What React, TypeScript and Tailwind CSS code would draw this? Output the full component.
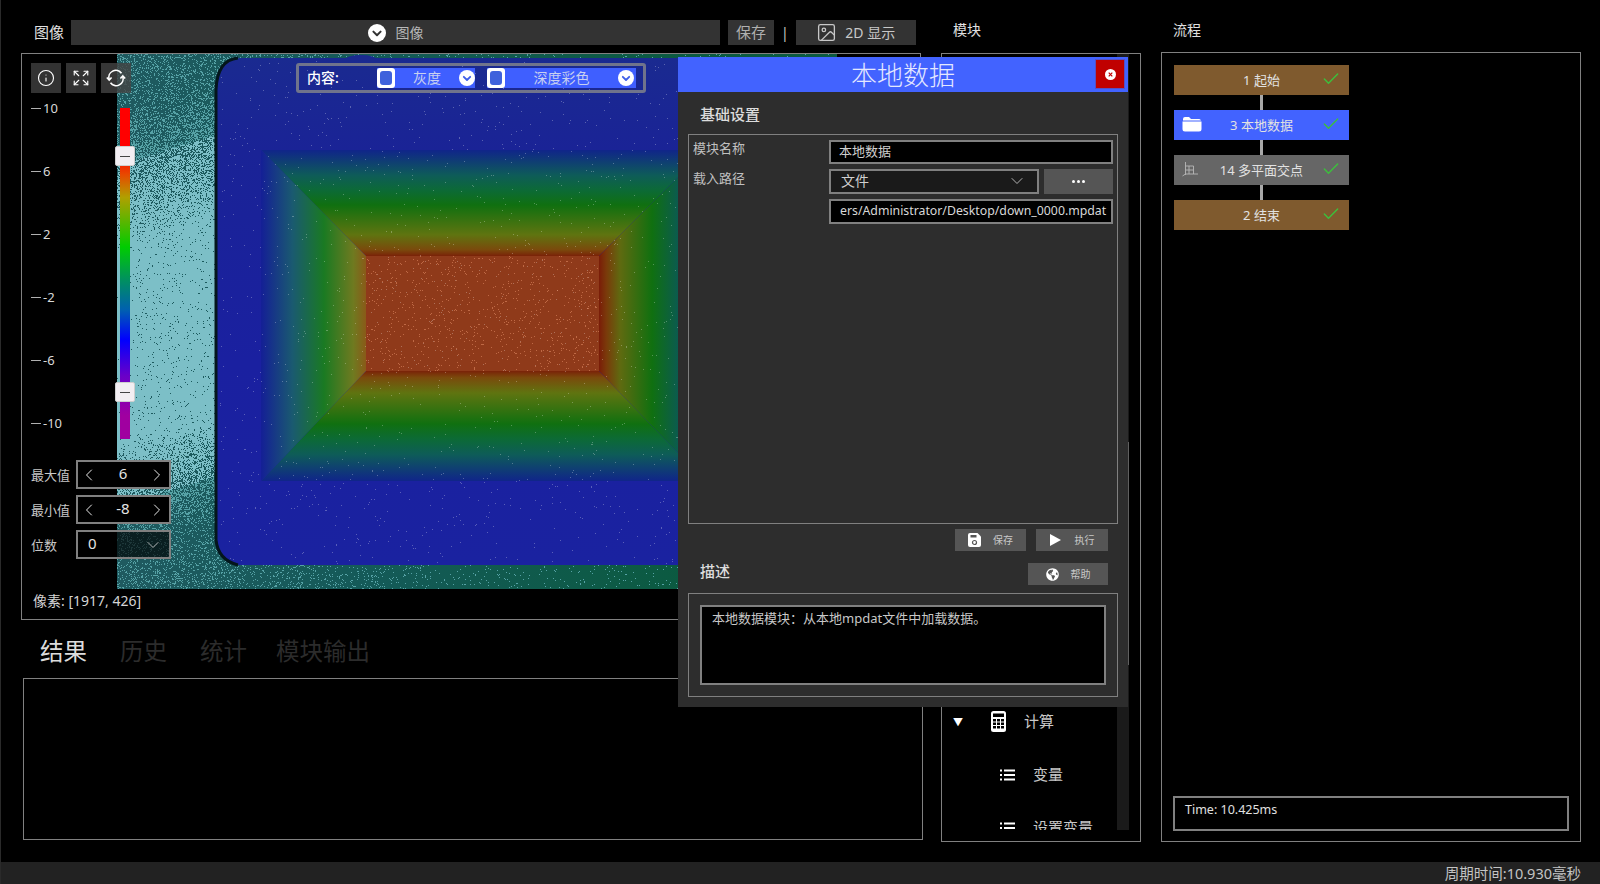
import React, { useMemo } from "react";
import { Info, Expand, Image as ImageIcon, ChevronLeft, ChevronRight, ChevronDown, Check } from "lucide-react";
import { FaGlobeAmericas } from "react-icons/fa";

const ticks = ["10", "6", "2", "-2", "-6", "-10"];

const makeRandom = (seed: number) => () => {
  seed = (seed + 0x6d2b79f5) | 0;
  let t = Math.imul(seed ^ (seed >>> 15), 1 | seed);
  t = (t + Math.imul(t ^ (t >>> 7), 61 | t)) ^ t;
  return ((t ^ (t >>> 14)) >>> 0) / 4294967296;
};

const lightDensity = (x: number, y: number) => {
  if (x > 232) return Math.max(0.03, 0.16 * (1 - (x - 232) / 260));
  const t = y + (x - 117) * 0.3;
  if (t < 110) return 0.2;
  if (t < 250) return 0.2 + ((t - 110) / 140) * 0.76;
  if (t < 445) return 0.97;
  if (t < 545) return 0.97 - ((t - 445) / 100) * 0.77;
  return 0.18;
};

// speckle of the scan, drawn as 1px runs
const buildSpeckle = () => {
  const rnd = makeRandom(7);
  let bright = "";
  let dim = "";
  for (let y = 53; y < 589; y++) {
    const right = y < 60 ? 830 : y > 560 ? 680 : 232;
    let run = 0;
    for (let x = 117; x <= right; x++) {
      const p = lightDensity(x, y);
      if (x < right && rnd() < p) {
        run++;
      } else if (run) {
        const seg = `M${x - run} ${y}h${run}v1h-${run}z`;
        if (p < 0.5) dim += seg;
        else bright += seg;
        run = 0;
      }
    }
  }
  let sparks = "";
  for (let i = 0; i < 1500; i++) {
    const x = Math.floor(220 + rnd() * 480);
    const y = Math.floor(60 + rnd() * 504);
    sparks += `M${x} ${y}h1v1h-1z`;
  }
  let hot = "";
  for (let i = 0; i < 800; i++) {
    const x = Math.floor(366 + rnd() * 233);
    const y = Math.floor(256 + rnd() * 115);
    hot += `M${x} ${y}h1v1h-1z`;
  }
  return { bright, dim, sparks, hot };
};

const DepthImage = () => {
  const { bright, dim, sparks, hot } = useMemo(buildSpeckle, []);
  return (
    <svg className="absolute left-[95px] top-[-1px]" width={720} height={536} viewBox="117 53 720 536">
      <defs>
        <linearGradient id="ground" x1="0" x2="1" y1="0" y2="0">
          <stop offset="0" stopColor="#1f5a60" />
          <stop offset="0.35" stopColor="#145a58" />
          <stop offset="0.8" stopColor="#0b5a40" />
        </linearGradient>
        <linearGradient id="plate" x1="0" x2="0" y1="0" y2="1">
          <stop offset="0" stopColor="#1a2a90" />
          <stop offset="0.18" stopColor="#1a2396" />
          <stop offset="0.6" stopColor="#1a20a0" />
          <stop offset="1" stopColor="#1a22a0" />
        </linearGradient>
        <linearGradient id="top" x1="0" x2="0" y1="0" y2="1">
          <stop offset="0" stopColor="#10258a" />
          <stop offset="0.24" stopColor="#0e5c58" />
          <stop offset="0.38" stopColor="#0c6a36" />
          <stop offset="0.52" stopColor="#107010" />
          <stop offset="0.8" stopColor="#5f7410" />
          <stop offset="0.94" stopColor="#7a4a0c" />
          <stop offset="1" stopColor="#7a2208" />
        </linearGradient>
        <linearGradient id="bottom" x1="0" x2="0" y1="1" y2="0">
          <stop offset="0" stopColor="#10258a" />
          <stop offset="0.24" stopColor="#0e5c58" />
          <stop offset="0.38" stopColor="#0c6a36" />
          <stop offset="0.52" stopColor="#107010" />
          <stop offset="0.8" stopColor="#5f7410" />
          <stop offset="0.94" stopColor="#7a4a0c" />
          <stop offset="1" stopColor="#7a2208" />
        </linearGradient>
        <linearGradient id="left" x1="0" x2="1" y1="0" y2="0">
          <stop offset="0" stopColor="#141f96" />
          <stop offset="0.3" stopColor="#1a5a70" />
          <stop offset="0.6" stopColor="#1a7a22" />
          <stop offset="0.88" stopColor="#6f7a20" />
          <stop offset="1" stopColor="#8a5a18" />
        </linearGradient>
        <linearGradient id="right" x1="1" x2="0" y1="0" y2="0">
          <stop offset="0" stopColor="#10258a" />
          <stop offset="0.24" stopColor="#0b5a52" />
          <stop offset="0.5" stopColor="#107010" />
          <stop offset="0.8" stopColor="#5f6a10" />
          <stop offset="0.93" stopColor="#7a3a0a" />
          <stop offset="1" stopColor="#7a1c08" />
        </linearGradient>
      </defs>
      <rect x="117" y="53" width="720" height="536" fill="url(#ground)" />
      <path d={dim} fill="#56a2a6" shapeRendering="crispEdges" />
      <path d={bright} fill="#7cbfc7" shapeRendering="crispEdges" />
      <ellipse cx="361" cy="60" rx="16" ry="5" fill="#1a2a90" />
      <rect x="216" y="58" width="500" height="507" rx="24" fill="url(#plate)" />
      <path d="M238 58Q217 60 216 90V540Q218 560 238 565" fill="none" stroke="#03161c" strokeWidth="3" />
      <polygon points="261,150 705,150 599,256 366,256" fill="url(#top)" />
      <polygon points="261,481 705,481 599,371 366,371" fill="url(#bottom)" />
      <polygon points="261,150 366,256 366,371 261,481" fill="url(#left)" />
      <polygon points="705,150 599,256 599,371 705,481" fill="url(#right)" />
      <rect x="366" y="256" width="233" height="115" fill="#8f3a1a" />
      <path d={sparks} fill="#ffffff" fillOpacity="0.28" shapeRendering="crispEdges" />
      <path d={hot} fill="#e8906a" fillOpacity="0.55" shapeRendering="crispEdges" />
    </svg>
  );
};

const CircleChevron = ({ size = 16, tone = "#3f5fe8" }: { size?: number; tone?: string }) => (
  <svg width={size} height={size} viewBox="0 0 16 16" className="shrink-0">
    <circle cx="8" cy="8" r="8" fill="#fff" />
    <path d="M4.8 6.8 8 10l3.2-3.2" fill="none" stroke={tone} strokeWidth="1.8" strokeLinecap="round" strokeLinejoin="round" />
  </svg>
);

const RefreshIcon = () => (
  <svg width="20" height="20" viewBox="0 0 20 20" fill="none" stroke="#fff" strokeWidth="1.6">
    <path d="M3.2 11.5A7 7 0 0 1 15.5 5.2" />
    <path d="M16.8 8.5A7 7 0 0 1 4.5 14.8" />
    <path d="M0.8 9.5 3.2 12l2.4-2.5" />
    <path d="M14.4 10.5 16.8 8l2.4 2.5" />
  </svg>
);

const Spin = ({ label, value }: { label: string; value: string }) => (
  <div className="flex items-center">
    <span className="w-[45px] pt-[2px] text-[13px] text-[#c8c8c8]">{label}</span>
    <div className="flex h-[29px] w-[95px] items-center justify-between border-[2px] border-[#808080] bg-black pl-[1px] pr-[2px]">
      <ChevronLeft className="h-[20px] w-[20px] text-white" strokeWidth={1.1} />
      <span className="pb-[3px] text-[15px] leading-none text-[#e4e4e4]">{value}</span>
      <ChevronRight className="h-[20px] w-[20px] text-white" strokeWidth={1.1} />
    </div>
  </div>
);

const ContentOption = ({ label, width, textWidth }: { label: string; width: string; textWidth: string }) => (
  <div className={`flex h-[20px] items-center bg-[#3f5fff] ${width}`}>
    <span className="flex h-[20px] w-[18px] items-center justify-center rounded-[3px] bg-white">
      <span className="h-[14px] w-[12px] rounded-[3px] bg-[#3f62dc]" />
    </span>
    <span className={`text-center text-[14px] leading-none text-[#c8d0f0] ${textWidth}`}>{label}</span>
    <CircleChevron />
  </div>
);

const FolderIcon = () => (
  <svg width="20" height="16" viewBox="0 0 20 16" fill="#fff">
    <path d="M1 3a2 2 0 0 1 2-2h4l2 2h8a2 2 0 0 1 2 1.5H1Z" />
    <path d="M0.5 5.5h19V13a2.5 2.5 0 0 1-2.5 2.5H3A2.5 2.5 0 0 1 .5 13Z" />
  </svg>
);

const PlanesIcon = () => (
  <svg width="17" height="17" viewBox="0 0 17 17" fill="none" stroke="#b8b8b8" strokeWidth="0.9">
    <path d="M3.5 1v13M0.5 15 3.5 13H16M3.5 5h8v8M7 5v8M3.5 9h8" />
  </svg>
);

const CalculatorIcon = () => (
  <svg width="15" height="21" viewBox="0 0 15 21">
    <rect width="15" height="21" rx="2.5" fill="#fff" />
    <rect x="2" y="2.5" width="11" height="3.5" fill="#000" />
    {[8, 11.5, 15].map((y) =>
      [2, 6, 10].map((x) => <rect key={`${x}-${y}`} x={x} y={y} width="3" height="2.5" fill="#000" />)
    )}
  </svg>
);

const ListIcon = () => (
  <svg width="15" height="12" viewBox="0 0 15 12" fill="#fff">
    <rect x="0" y="0.5" width="2" height="2" />
    <rect x="0" y="5" width="2" height="2" />
    <rect x="0" y="9.5" width="2" height="2" />
    <rect x="4" y="0.5" width="11" height="2" />
    <rect x="4" y="5" width="11" height="2" />
    <rect x="4" y="9.5" width="11" height="2" />
  </svg>
);

const SaveIcon = () => (
  <svg width="13" height="14" viewBox="0 0 13 14">
    <path d="M2 0h7.5L13 3.5V12a2 2 0 0 1-2 2H2a2 2 0 0 1-2-2V2a2 2 0 0 1 2-2Z" fill="#fff" />
    <rect x="2.5" y="2" width="6" height="2.5" fill="#555" />
    <circle cx="6.5" cy="9.5" r="2" fill="none" stroke="#555" strokeWidth="1.2" />
  </svg>
);

const FlowNode = ({ label, tone, icon }: { label: string; tone: string; icon?: React.ReactNode }) => (
  <div className={`relative flex h-[30px] w-[175px] items-center justify-center pt-[2px] text-[13px] text-[#e2e2e2] ${tone}`}>
    {icon && <span className="absolute left-[8px] top-[6px]">{icon}</span>}
    <span>{label}</span>
    <Check className="absolute right-[8px] top-[4px] h-[20px] w-[20px] text-[#3cc03c]" strokeWidth={1.7} />
  </div>
);

const Link = () => <div className="ml-[86px] h-[15px] w-[3px] bg-[#a8a8a8]" />;

export default function App() {
  return (
    <div
      className="relative flex h-[884px] w-[1600px] flex-col overflow-hidden border-l border-[#2a2a2a] bg-black text-[#e0e0e0]"
      style={{ fontFamily: '"Noto Sans", "Noto Sans CJK SC", sans-serif' }}
    >
      <div className="flex h-[862px] pl-[20px]">
        {/* Image column */}
        <div className="flex w-[902px] flex-col">
          <div className="mt-[20px] flex h-[25px] items-center">
            <span className="ml-[13px] w-[37px] text-[15px] leading-none">图像</span>
            <div className="flex h-[25px] w-[649px] items-center justify-center gap-[10px] bg-[#333333]">
              <CircleChevron size={18} tone="#333333" />
              <span className="text-[14px] leading-none text-[#b8b8b8]">图像</span>
            </div>
            <button className="ml-[8px] h-[25px] w-[46px] bg-[#333333] text-[15px] leading-none text-[#b0b0b0]">保存</button>
            <span className="ml-[7px] text-[14px] leading-none text-[#c8c8c8]">|</span>
            <button className="ml-[7px] flex h-[25px] w-[120px] items-center justify-center gap-[8px] bg-[#333333] text-[14px] leading-none text-[#c8c8c8]">
              <ImageIcon className="h-[21px] w-[21px]" strokeWidth={1.5} />
              2D 显示
            </button>
          </div>

          <div className="relative mt-[8px] h-[567px] w-[900px] overflow-hidden border border-[#808080]">
            <DepthImage />
            <div className="relative flex h-full flex-col pl-[9px] pt-[9px]">
              <div className="flex gap-[5px]">
                <button className="flex h-[30px] w-[30px] items-center justify-center bg-[#333333]">
                  <Info className="h-[18px] w-[18px] text-white" strokeWidth={1.5} />
                </button>
                <button className="flex h-[30px] w-[30px] items-center justify-center bg-[#333333]">
                  <Expand className="h-[18px] w-[18px] text-white" strokeWidth={1.5} />
                </button>
                <button className="flex h-[30px] w-[30px] items-center justify-center bg-[#444444]/80">
                  <RefreshIcon />
                </button>
              </div>

              <div className="relative mt-[5px] flex flex-col gap-[43px]">
                {ticks.map((t) => (
                  <div key={t} className="flex h-[20px] items-center">
                    <span className="mr-[2px] h-px w-[10px] bg-[#b0b0b0]" />
                    <span className="text-[13px] leading-none text-[#d8d8d8]">{t}</span>
                  </div>
                ))}
                {/* depth colour scale */}
                <div className="absolute left-[89px] top-[10px] h-[331px] w-[10px] bg-[linear-gradient(180deg,#ff0000_0%,#ff0000_14%,#e84800_20%,#b0a000_27%,#00cc00_42%,#009060_52%,#0060b0_61%,#0000ff_70%,#6a00c8_81%,#a000a0_93%,#a000a0_100%)]" />
                <div className="absolute left-[84px] top-[48px] flex h-[20px] w-[20px] items-center justify-center rounded-[2px] border border-[#cfcfcf] bg-[#f2eef2]">
                  <span className="h-px w-[10px] bg-[#444]" />
                </div>
                <div className="absolute left-[84px] top-[284px] flex h-[20px] w-[20px] items-center justify-center rounded-[2px] border border-[#cfcfcf] bg-[#f2eef2]">
                  <span className="h-px w-[10px] bg-[#444]" />
                </div>
              </div>

              <div className="mt-[27px] flex flex-col gap-[6px]">
                <Spin label="最大值" value="6" />
                <Spin label="最小值" value="-8" />
                <div className="flex items-center">
                  <span className="w-[45px] pt-[2px] text-[13px] text-[#c8c8c8]">位数</span>
                  <div className="flex h-[29px] w-[95px] items-center justify-between border-[2px] border-[#808080] bg-black/65 pl-[10px] pr-[6px]">
                    <span className="pb-[2px] text-[15px] leading-none text-[#e4e4e4]">0</span>
                    <ChevronDown className="h-[20px] w-[20px] text-[#c0c0c0]" strokeWidth={1.1} />
                  </div>
                </div>
              </div>
            </div>

            {/* bottom strip under the image */}
            <div className="absolute bottom-0 left-0 flex h-[30px] w-full items-center bg-black pb-[6px] pl-[11px] text-[14px] leading-none text-[#d4d4d4]">
              像素: [1917, 426]
            </div>

            {/* content selector over the image */}
            <div className="absolute left-[274px] top-[9px] flex h-[30px] w-[350px] items-center rounded-[3px] border-[3px] border-[#70748c] pl-[8px]">
              <span className="w-[70px] text-[14px] font-medium leading-none text-white">内容:</span>
              <ContentOption label="灰度" width="w-[98px]" textWidth="w-[64px]" />
              <span className="w-[12px]" />
              <ContentOption label="深度彩色" width="w-[149px]" textWidth="w-[113px]" />
            </div>
          </div>

          <div className="ml-[19px] mt-[16px] flex h-[32px] items-center gap-[33px] text-[23.5px] leading-none text-[#2c2c2c]">
            <span className="text-[#dcdcdc]">结果</span>
            <span>历史</span>
            <span>统计</span>
            <span className="-ml-[4px]">模块输出</span>
          </div>
          <div className="ml-[2px] mt-[10px] h-[162px] w-[900px] border border-[#808080]" />
        </div>

        {/* Module column */}
        <div className="ml-[18px] flex w-[200px] flex-col">
          <span className="ml-[12px] mt-[23px] h-[30px] text-[14px] leading-none">模块</span>
          <div className="flex h-[789px] border border-[#808080]">
            <div className="h-[776px] flex-1 overflow-hidden pt-[641px] text-[15px] text-[#c8c8c8]">
              <div className="flex h-[53px] items-center">
                <span className="ml-[11px] text-[10px] leading-none text-white">▼</span>
                <span className="ml-[28px]">
                  <CalculatorIcon />
                </span>
                <span className="ml-[18px] leading-none">计算</span>
              </div>
              <div className="flex h-[53px] items-center">
                <span className="ml-[58px]">
                  <ListIcon />
                </span>
                <span className="ml-[18px] leading-none">变量</span>
              </div>
              <div className="flex h-[53px] items-center">
                <span className="ml-[58px]">
                  <ListIcon />
                </span>
                <span className="ml-[18px] leading-none">设置变量</span>
              </div>
            </div>
            <div className="mr-[11px] h-[776px] w-[12px] bg-[#1a1a1a]">
              <div className="mt-[388px] h-[223px] bg-[#606060]" />
            </div>
          </div>
        </div>

        {/* Flow column */}
        <div className="ml-[20px] flex w-[420px] flex-col">
          <span className="ml-[12px] mt-[23px] h-[29px] text-[14px] leading-none">流程</span>
          <div className="flex h-[790px] flex-col border border-[#808080] px-[11px] pt-[12px]">
            <div className="ml-[1px] flex flex-col">
              <FlowNode label="1 起始" tone="bg-[#7f5a2e]" />
              <Link />
              <FlowNode label="3 本地数据" tone="bg-[#4263ff]" icon={<FolderIcon />} />
              <Link />
              <FlowNode label="14 多平面交点" tone="bg-[#666666]" icon={<PlanesIcon />} />
              <Link />
              <FlowNode label="2 结束" tone="bg-[#7f5a2e]" />
            </div>
            <div className="mb-[10px] mt-auto h-[35px] border-[2px] border-[#808080] pl-[10px] pt-[2px] text-[12.5px] leading-[20px] text-[#e0e0e0]">
              Time: 10.425ms
            </div>
          </div>
        </div>
      </div>

      {/* Status bar */}
      <div className="flex h-[22px] items-center justify-end bg-[#222222] pr-[19px] text-[14.5px] leading-none text-[#c4c4c4]">
        周期时间:10.930毫秒
      </div>

      {/* Module settings dialog */}
      <div className="absolute left-[677px] top-[57px] flex h-[650px] w-[450px] flex-col bg-[#2d2d2d]">
        <div className="relative flex h-[35px] items-center justify-center bg-[#4263ff] text-[26px] font-light leading-none text-[#e4e8ff]">
          本地数据
          <button className="absolute right-[3px] top-[2px] flex h-[30px] w-[30px] items-center justify-center border border-[#5a50c0] bg-[#c00000]">
            <svg width="11" height="11" viewBox="0 0 11 11">
              <circle cx="5.5" cy="5.5" r="5.5" fill="#fff" />
              <path d="M3.7 3.7l3.6 3.6M7.3 3.7 3.7 7.3" stroke="#c00000" strokeWidth="1.2" />
            </svg>
          </button>
        </div>

        <div className="ml-[22px] mt-[12px] h-[30px] text-[15px] font-medium leading-[20px] text-[#dcdcdc]">基础设置</div>
        <div className="mx-[10px] flex h-[390px] border border-[#808080] pl-[4px] pr-[4px] pt-[5px] text-[13px] leading-none">
          <div className="w-[136px] text-[#c0c0c0]">
            <div className="h-[29px] pt-[2px]">模块名称</div>
            <div className="pt-[3px]">载入路径</div>
          </div>
          <div className="flex flex-1 flex-col gap-[5px]">
            <div className="flex h-[24px] items-center border-[2px] border-[#808080] bg-black pb-[2px] pl-[8px] text-[#d0d0d0]">本地数据</div>
            <div className="flex h-[25px] gap-[5px]">
              <div className="flex w-[210px] items-center justify-between border-[2px] border-[#808080] bg-[#1a1a1a] pb-[1px] pl-[10px] pr-[10px] text-[14px] text-[#d0d0d0]">
                文件
                <ChevronDown className="h-[20px] w-[20px] text-[#c0c0c0]" strokeWidth={1.1} />
              </div>
              <div className="flex flex-1 items-center justify-center gap-[2px] bg-[#555555]">
                <span className="h-[3px] w-[3px] rounded-full bg-white" />
                <span className="h-[3px] w-[3px] rounded-full bg-white" />
                <span className="h-[3px] w-[3px] rounded-full bg-white" />
              </div>
            </div>
            <div className="flex h-[25px] items-center overflow-hidden whitespace-nowrap border-[2px] border-[#808080] bg-black pb-[1px] pl-[9px] text-[12.3px] text-[#d8d8d8]">
              ers/Administrator/Desktop/down_0000.mpdat
            </div>
          </div>
        </div>

        <div className="mt-[5px] flex justify-end gap-[10px] pr-[20px]">
          <button className="flex h-[22px] w-[71px] items-center justify-center gap-[12px] bg-[#555555] text-[10px] leading-none text-[#c8c8c8]">
            <SaveIcon />
            保存
          </button>
          <button className="flex h-[22px] w-[72px] items-center justify-center gap-[14px] bg-[#555555] text-[10px] leading-none text-[#c8c8c8]">
            <svg width="11" height="12" viewBox="0 0 11 12">
              <path d="M0 0 11 6 0 12Z" fill="#fff" />
            </svg>
            执行
          </button>
        </div>

        <div className="mt-[12px] flex h-[22px] items-start justify-between pl-[22px] pr-[20px]">
          <span className="text-[15px] font-medium leading-[16px] text-[#dcdcdc]">描述</span>
          <button className="flex h-[22px] w-[80px] items-center justify-center gap-[12px] bg-[#555555] text-[10px] leading-none text-[#c8c8c8]">
            <FaGlobeAmericas className="h-[13px] w-[13px] text-white" />
            帮助
          </button>
        </div>

        <div className="mx-[10px] mt-[8px] h-[104px] border border-[#808080] p-[11px]">
          <div className="h-full border-[2px] border-[#808080] bg-black pl-[10px] pt-[1px] text-[13px] leading-[20px] text-[#c8c8c8]">
            本地数据模块：从本地mpdat文件中加载数据。
          </div>
        </div>
      </div>
    </div>
  );
}
